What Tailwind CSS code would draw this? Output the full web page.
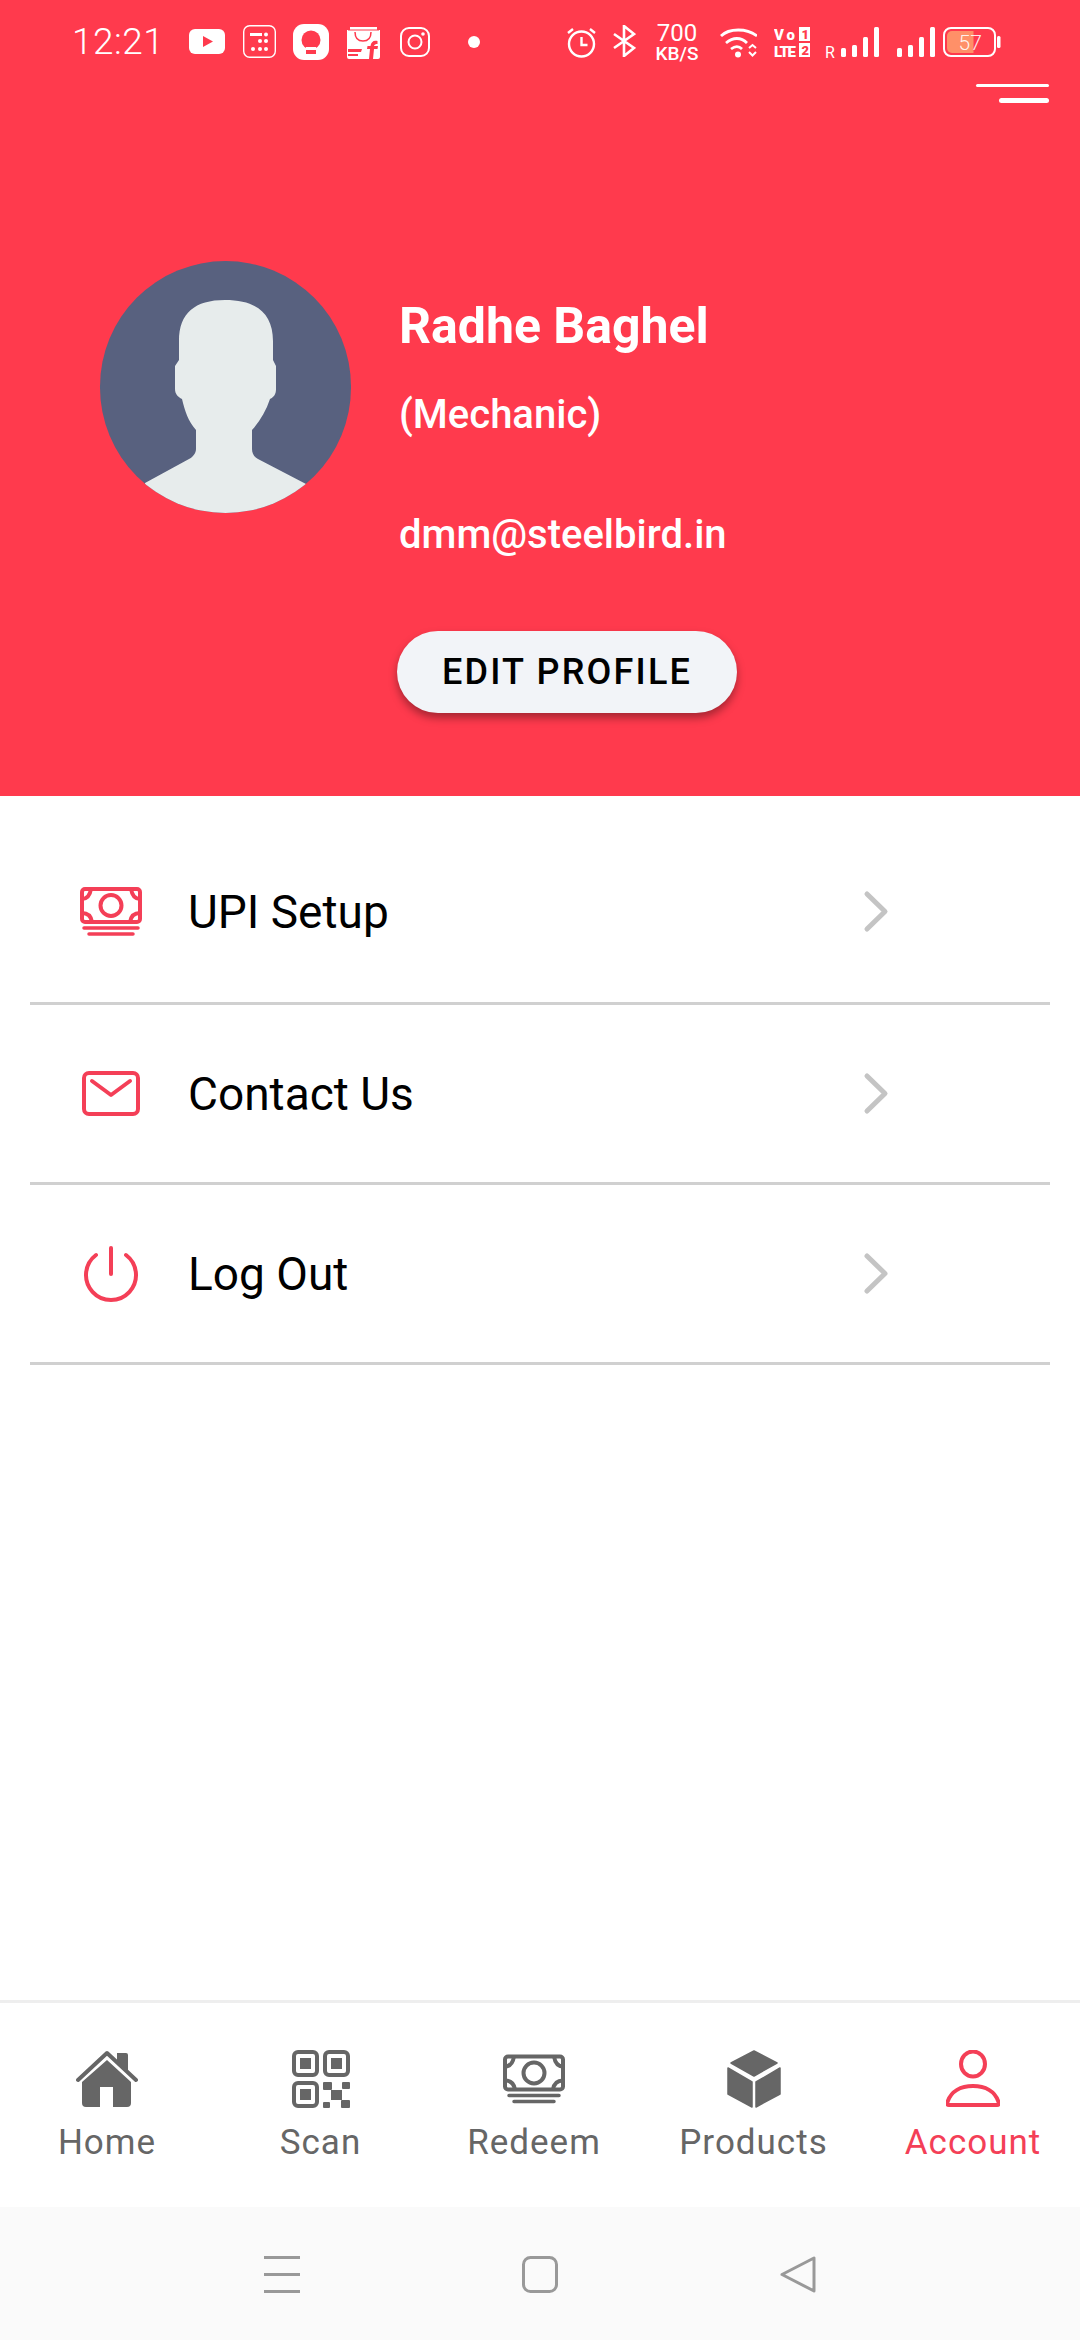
<!DOCTYPE html>
<html>
<head>
<meta charset="utf-8">
<script src="https://cdn.jsdelivr.net/npm/@tailwindcss/browser@4"></script>
</head>
<body class="m-0">
<div class="w-[1080px] h-[2340px] flex flex-col bg-white font-['Roboto',sans-serif] overflow-hidden">

  <!-- Header -->
  <header class="h-[796px] shrink-0 bg-[#ff3a4d] text-white flex flex-col">
    <div class="h-[261px] shrink-0 flex flex-col">
      <!-- status bar -->
      <div class="h-[84px] shrink-0 relative flex items-start pt-[24px] pl-[72px]">
        <span class="w-[117px] shrink-0 text-[37px] leading-[36px] font-light tracking-[0.5px]">12:21</span>
        <svg class="w-[36px] h-[25px] mt-[5px] shrink-0" viewBox="0 0 36 25"><rect width="36" height="25" rx="6" fill="#fff"/><path d="M14 7l10 5.5L14 18z" fill="#ff3a4d"/></svg>
        <svg class="w-[33px] h-[33px] ml-[18px] mt-[1px] shrink-0" viewBox="0 0 33 33"><rect x=".7" y=".7" width="31.6" height="31.6" rx="6" fill="none" stroke="#fff" stroke-width="1.4"/><path d="M7 8h12v3H7z" fill="#fff"/><g fill="#fff"><circle cx="23" cy="9.500" r="2"/><circle cx="17" cy="16" r="2"/><circle cx="23" cy="16" r="2"/><circle cx="10" cy="24" r="2"/><circle cx="17" cy="24" r="2"/><circle cx="23" cy="24" r="2"/></g></svg>
        <svg class="w-[36px] h-[36px] ml-[17px] shrink-0" viewBox="0 0 36 36"><rect width="36" height="36" rx="11" fill="#fff"/><circle cx="18" cy="16" r="9.500" fill="#ff3a4d"/><rect x="13" y="23" width="10" height="4" fill="#fff"/><rect x="13" y="26" width="10" height="4" fill="#ff3a4d"/></svg>
        <svg class="w-[33px] h-[34px] ml-[18px] mt-[1px] shrink-0" viewBox="0 0 33 34"><path d="M3 2h27v3h3v27a2 2 0 0 1-2 2H2a2 2 0 0 1-2-2V5h3z" fill="#fff"/><path d="M8 7c0 7 4 9 8 9s8-2 8-9" fill="none" stroke="#ff3a4d" stroke-width="1.500"/><path d="M1 5h31" stroke="#ff3a4d" stroke-width="1"/><path d="M22 34l1-10h-3l.5-3h3c.5-4 3-6 7-5v3c-2 0-3 .5-3.500 2H31l-.5 3h-3.500l-1 10zM1 24h14l-1 3H1zM1 29h10v2H1z" fill="#ff3a4d"/></svg>
        <svg class="w-[30px] h-[30px] ml-[20px] mt-[3px] shrink-0" viewBox="0 0 30 30"><rect x="1" y="1" width="28" height="28" rx="8" fill="none" stroke="#fff" stroke-width="2"/><circle cx="15" cy="15" r="6.500" fill="none" stroke="#fff" stroke-width="2"/><circle cx="23" cy="7" r="1.800" fill="#fff"/></svg>
        <span class="w-[12px] h-[12px] ml-[38px] mt-[12px] rounded-full bg-white shrink-0"></span>

        <svg class="w-[29px] h-[31px] ml-[87px] mt-[3px] shrink-0" viewBox="0 0 29 31"><circle cx="14.500" cy="17" r="12.500" fill="none" stroke="#fff" stroke-width="2.400"/><path d="M14.500 10v8h6M1 6l5-4M28 6l-5-4" fill="none" stroke="#fff" stroke-width="2.400"/></svg>
        <svg class="w-[23px] h-[32px] ml-[17px] mt-[1px] shrink-0" viewBox="0 0 23 32"><path d="M1 9l20 14-10 8V1l10 8L1 23" fill="none" stroke="#fff" stroke-width="2.600"/></svg>
        <div class="w-[46px] ml-[18px] flex flex-col items-center shrink-0 -mt-[1px]">
          <span class="text-[24px] leading-[21px] font-normal">700</span>
          <span class="text-[19px] leading-[17px] font-medium mt-[1px]">KB/S</span>
        </div>
        <svg class="w-[37px] h-[31px] ml-[20px] mt-[3px] shrink-0" viewBox="0 0 37 31"><path d="M1 8c8-8 26-8 36 0M6 15c7-6 15-6 21 0M11 21c4-3 8-3 11 0" transform="translate(0 1)" fill="none" stroke="#fff" stroke-width="2.800"/><circle cx="18" cy="27.500" r="3" fill="#fff"/><path d="M29 21l3.500-3 3.500 3M29 25l3.500 3.500 3.500-3.500" fill="none" stroke="#fff" stroke-width="2"/></svg>
        <svg class="w-[36px] h-[31px] ml-[17px] mt-[3px] shrink-0" viewBox="0 0 36 31"><text x="0" y="13" font-family="Roboto" font-weight="900" font-size="15" fill="#fff" textLength="21">Vo</text><rect x="25" y="0" width="11" height="14" fill="#fff"/><text x="27.500" y="12" font-family="Roboto" font-weight="900" font-size="13" fill="#ff3a4d">1</text><text x="0" y="30" font-family="Roboto" font-weight="900" font-size="15" fill="#fff" textLength="22">LTE</text><rect x="25" y="16" width="11" height="14" fill="#fff"/><text x="27.500" y="28" font-family="Roboto" font-weight="900" font-size="13" fill="#ff3a4d">2</text></svg>
        <svg class="w-[111px] h-[32px] ml-[15px] mt-[3px] shrink-0" viewBox="0 0 111 32"><text x="0" y="31" font-family="Roboto" font-size="16" fill="#fff">R</text><g fill="#fff"><rect x="16" y="21" width="5" height="9" rx="1.500"/><rect x="27" y="18" width="5" height="12" rx="1.500"/><rect x="38" y="10" width="5" height="20" rx="1.500"/><rect x="49" y="0" width="5" height="30" rx="1.500"/><rect x="72" y="21" width="5" height="9" rx="1.500"/><rect x="83" y="18" width="5" height="12" rx="1.500"/><rect x="94" y="10" width="5" height="20" rx="1.500"/><rect x="105" y="0" width="5" height="30" rx="1.500"/></g></svg>
        <svg class="w-[58px] h-[30px] ml-[7px] mt-[3px] shrink-0" viewBox="0 0 58 30"><rect x="1" y="1" width="51" height="28" rx="7" fill="none" stroke="#fff" stroke-width="2"/><path d="M9 4h21.500v22H9a5 5 0 0 1-5-5V9a5 5 0 0 1 5-5z" fill="#ff9068"/><rect x="54" y="9" width="3.500" height="12" rx="1.500" fill="#fff"/><text x="15.500" y="23" font-family="Roboto" font-weight="300" font-size="21" fill="#fff" fill-opacity=".9">57</text></svg>
      </div>
      <!-- menu -->
      <div class="flex flex-col items-end pr-[31px] gap-[11px]">
        <span class="block w-[73px] h-[3px] rounded-full bg-white"></span>
        <span class="block w-[50px] h-[5px] rounded-full bg-white"></span>
      </div>
    </div>
    <!-- profile -->
    <div class="flex items-start pl-[100px]">
      <div class="w-[251px] h-[252px] rounded-full overflow-hidden bg-[#58617f] shrink-0">
        <svg class="block w-[251px] h-[252px]" viewBox="0 0 251 252"><path d="M79 80C79 52 95 39 125 39C156 39 173 52 173 80L173 99L176 105L176 128C176 133 174 136 170 138C166 150 160 160 152 169L152 188C152 192 154 196 158 198L206 223L206 260L45 260L45 222L89 198C93 196 96 192 96 188L96 169C88 160 85 150 82 138C78 136 75 133 75 128L75 105L79 99Z" fill="#e7ecec"/></svg>
      </div>
      <div class="ml-[48px] mt-[35px] flex flex-col items-start">
        <h1 class="text-[50px] leading-[60px] font-bold">Radhe Baghel</h1>
        <p class="mt-[35px] text-[40px] leading-[48px] font-medium">(Mechanic)</p>
        <p class="mt-[72px] text-[40px] leading-[48px] font-medium">dmm@steelbird.in</p>
        <button class="mt-[72px] -ml-[2px] w-[340px] h-[82px] rounded-full bg-[#f2f4f8] text-black text-[36px] font-medium tracking-[2.200px] shadow-[0_5px_8px_rgba(0,0,0,0.35)]">EDIT PROFILE</button>
      </div>
    </div>
  </header>

  <!-- List -->
  <main class="flex-1 flex flex-col px-[30px]">
    <a class="h-[209px] shrink-0 border-b-[3px] border-[#d0d0d0] flex items-center pt-[25px] pl-[50px]">
      <svg class="w-[62px] h-[49px] shrink-0" viewBox="0 0 62 49"><g fill="none" stroke="#f43f57" stroke-width="4"><rect x="2" y="2" width="58" height="33" rx="3"/><circle cx="31" cy="18.500" r="10.500"/><path d="M2 12c5 0 8-4 9-10M60 12c-5 0-8-4-9-10M2 26c6 0 9 3 10 9M60 26c-6 0-9 3-10 9"/></g><path d="M4 41h54M9 47h44" stroke="#f43f57" stroke-width="3.500" stroke-linecap="round"/></svg>
      <span class="ml-[46px] text-[46px] leading-[54px] text-black flex-1">UPI Setup</span>
      <svg class="w-[26px] h-[44px] mr-[161px] shrink-0" viewBox="0 0 26 44"><path d="M4 4l18 17.500L4 39" fill="none" stroke="#c4c4c4" stroke-width="5" stroke-linecap="round" stroke-linejoin="round"/></svg>
    </a>
    <a class="h-[180px] shrink-0 border-b-[3px] border-[#d0d0d0] flex items-center pl-[50px]">
      <svg class="w-[62px] h-[49px] shrink-0" viewBox="0 0 62 49"><rect x="4" y="4" width="54" height="41" rx="5" fill="none" stroke="#f43f57" stroke-width="4"/><path d="M12 12l19 14 19-14" fill="none" stroke="#f43f57" stroke-width="4" stroke-linecap="round" stroke-linejoin="round"/></svg>
      <span class="ml-[46px] text-[46px] leading-[54px] text-black flex-1">Contact Us</span>
      <svg class="w-[26px] h-[44px] mr-[161px] shrink-0" viewBox="0 0 26 44"><path d="M4 4l18 17.500L4 39" fill="none" stroke="#c4c4c4" stroke-width="5" stroke-linecap="round" stroke-linejoin="round"/></svg>
    </a>
    <a class="h-[180px] shrink-0 border-b-[3px] border-[#d0d0d0] flex items-center pl-[50px]">
      <svg class="w-[62px] h-[56px] shrink-0" viewBox="0 0 62 56"><path d="M16 9a25 25 0 1 0 30 0" fill="none" stroke="#f43f57" stroke-width="4" stroke-linecap="round"/><path d="M31 2v26" stroke="#f43f57" stroke-width="4" stroke-linecap="round"/></svg>
      <span class="ml-[46px] text-[46px] leading-[54px] text-black flex-1">Log Out</span>
      <svg class="w-[26px] h-[44px] mr-[161px] shrink-0" viewBox="0 0 26 44"><path d="M4 4l18 17.500L4 39" fill="none" stroke="#c4c4c4" stroke-width="5" stroke-linecap="round" stroke-linejoin="round"/></svg>
    </a>
  </main>

  <!-- Bottom nav -->
  <nav class="h-[207px] shrink-0 border-t-[3px] border-[#eeeeee] bg-white grid grid-cols-[214px_213px_214px_225px_214px] text-[35px] leading-[42px] tracking-[1px] text-[#666666]">
    <div class="flex flex-col items-center pt-[47px]">
      <svg class="w-[62px] h-[58px]" viewBox="0 0 62 58"><path d="M41 3h9a2 2 0 0 1 2 2v18l-11-10z" fill="#666"/><path d="M2 30L31 3l29 27" fill="none" stroke="#666" stroke-width="4" stroke-linecap="round" stroke-linejoin="round"/><path d="M31 10L55 32V53a4 4 0 0 1-4 4H37V37H24V57H10a4 4 0 0 1-4-4V32Z" fill="#666"/></svg>
      <span class="mt-[14px]">Home</span>
    </div>
    <div class="flex flex-col items-center pt-[47px]">
      <svg class="w-[58px] h-[58px]" viewBox="0 0 58 58"><g fill="none" stroke="#666" stroke-width="4"><rect x="2" y="2" width="23" height="23" rx="4"/><rect x="33" y="2" width="23" height="23" rx="4"/><rect x="2" y="33" width="23" height="23" rx="4"/></g><g fill="#666"><rect x="8" y="8" width="11" height="11"/><rect x="39" y="8" width="11" height="11"/><rect x="8" y="39" width="11" height="11"/><rect x="31" y="32" width="9" height="8" rx="1"/><rect x="50" y="32" width="8" height="7" rx="1"/><rect x="39" y="40" width="11" height="10"/><rect x="31" y="52" width="7" height="6" rx="1"/><rect x="49" y="50" width="9" height="8" rx="1"/></g></svg>
      <span class="mt-[14px]">Scan</span>
    </div>
    <div class="flex flex-col items-center pt-[51px]">
      <svg class="w-[62px] h-[50px]" viewBox="0 0 62 49"><g fill="none" stroke="#666" stroke-width="4"><rect x="2" y="2" width="58" height="33" rx="3"/><circle cx="31" cy="18.500" r="10.500"/><path d="M2 12c5 0 8-4 9-10M60 12c-5 0-8-4-9-10M2 26c6 0 9 3 10 9M60 26c-6 0-9 3-10 9"/></g><path d="M6 41h50M11 47h40" stroke="#666" stroke-width="3.500" stroke-linecap="round"/></svg>
      <span class="mt-[18px]">Redeem</span>
    </div>
    <div class="flex flex-col items-center pt-[47px]">
      <svg class="w-[54px] h-[58px]" viewBox="0 0 54 58"><g fill="#666" stroke="#666" stroke-width="1.500" stroke-linejoin="round"><path d="M27 1l23 12-23 13L4 13z"/><path d="M1 18l24 14v25L1 44z"/><path d="M53 18L29 32v25l24-13z"/></g></svg>
      <span class="mt-[14px]">Products</span>
    </div>
    <div class="flex flex-col items-center pt-[47px] text-[#f43f57]">
      <svg class="w-[54px] h-[58px]" viewBox="0 0 54 58"><ellipse cx="27" cy="14" rx="12" ry="12.500" fill="none" stroke="#f43f57" stroke-width="4"/><path d="M3 55c-2 0-2-1-1.500-3C5 41 15 36 27 36s22 5 25.500 16c.5 2 .5 3-1.500 3z" fill="none" stroke="#f43f57" stroke-width="4" stroke-linejoin="round"/></svg>
      <span class="mt-[14px]">Account</span>
    </div>
  </nav>

  <!-- System nav -->
  <footer class="h-[133px] shrink-0 bg-[#fafafa] flex items-start pt-[49px] pl-[264px]">
    <svg class="w-[36px] h-[37px] shrink-0" viewBox="0 0 36 37"><path d="M0 1.500h36M0 18.500h36M0 35.500h36" stroke="#999" stroke-width="3"/></svg>
    <svg class="w-[36px] h-[37px] ml-[222px] shrink-0" viewBox="0 0 36 37"><rect x="1.500" y="1.500" width="33" height="34" rx="7" fill="none" stroke="#999" stroke-width="3"/></svg>
    <svg class="w-[36px] h-[37px] ml-[222px] shrink-0" viewBox="0 0 36 37"><path d="M2 18.500L34 2v33z" fill="none" stroke="#999" stroke-width="3" stroke-linejoin="round"/></svg>
  </footer>
</div>
</body>
</html>
